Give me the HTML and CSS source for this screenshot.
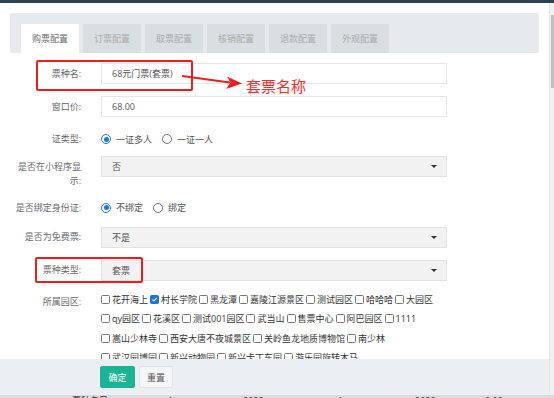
FILE: index.html
```html
<!DOCTYPE html>
<html lang="zh-CN">
<head>
<meta charset="utf-8">
<title>票种配置</title>
<link rel="stylesheet" href="styles.css">
</head>
<body>
<div class="topbar"></div>
<div class="window">
  <div class="main">
    <div class="content">
      <div class="tabs">
        <div class="tab active">购票配置</div>
        <div class="tab">订票配置</div>
        <div class="tab">取票配置</div>
        <div class="tab">核销配置</div>
        <div class="tab">退款配置</div>
        <div class="tab">外观配置</div>
      </div>
      <div class="form">
        <div class="row">
          <div class="label">票种名:</div>
          <div class="control">68元门票(套票)</div>
        </div>
        <div class="row">
          <div class="label">窗口价:</div>
          <div class="control">68.00</div>
        </div>
        <div class="row choice r-cert">
          <div class="label">证类型:</div>
          <div class="opts">
            <span class="opt"><i class="radio on"></i>一证多人</span>
            <span class="opt"><i class="radio"></i>一证一人</span>
          </div>
        </div>
        <div class="row r-mini">
          <div class="label">是否在小程序显示:</div>
          <div class="control select"><span>否</span><i class="caret"></i></div>
        </div>
        <div class="row choice r-bind">
          <div class="label">是否绑定身份证:</div>
          <div class="opts">
            <span class="opt"><i class="radio on"></i>不绑定</span>
            <span class="opt"><i class="radio"></i>绑定</span>
          </div>
        </div>
        <div class="row">
          <div class="label">是否为免费票:</div>
          <div class="control select"><span>不是</span><i class="caret"></i></div>
        </div>
        <div class="row r-type">
          <div class="label">票种类型:</div>
          <div class="control select"><span>套票</span><i class="caret"></i></div>
        </div>
        <div class="row r-park">
          <div class="label">所属园区:</div>
          <div class="checks">
            <div class="cb-line">
              <span class="cb"><i class="box"></i>花开海上</span>
              <span class="cb"><i class="box checked"><svg viewBox="0 0 9 9"><path d="M2 4.6 L3.8 6.4 L7.2 2.6" fill="none" stroke="#fff" stroke-width="1.4"/></svg></i>村长学院</span>
              <span class="cb"><i class="box"></i>黑龙潭</span>
              <span class="cb"><i class="box"></i>嘉陵江源景区</span>
              <span class="cb"><i class="box"></i>测试园区</span>
              <span class="cb"><i class="box"></i>哈哈哈</span>
              <span class="cb"><i class="box"></i>大园区</span>
            </div>
            <div class="cb-line">
              <span class="cb"><i class="box"></i>qy园区</span>
              <span class="cb"><i class="box"></i>花溪区</span>
              <span class="cb"><i class="box"></i>测试001园区</span>
              <span class="cb"><i class="box"></i>武当山</span>
              <span class="cb"><i class="box"></i>售票中心</span>
              <span class="cb"><i class="box"></i>阿巴园区</span>
              <span class="cb"><i class="box"></i>1111</span>
            </div>
            <div class="cb-line">
              <span class="cb"><i class="box"></i>嵩山少林寺</span>
              <span class="cb"><i class="box"></i>西安大唐不夜城景区</span>
              <span class="cb"><i class="box"></i>关岭鱼龙地质博物馆</span>
              <span class="cb"><i class="box"></i>南少林</span>
            </div>
            <div class="cb-line">
              <span class="cb"><i class="box"></i>武汉园博园</span>
              <span class="cb"><i class="box"></i>新兴动物园</span>
              <span class="cb"><i class="box"></i>新兴卡丁车园</span>
              <span class="cb"><i class="box"></i>游乐园旋转木马</span>
            </div>
          </div>
        </div>
      </div>
    </div>
    <div class="footer">
      <button class="btn primary">确定</button>
      <button class="btn plain">重置</button>
    </div>
  </div>
  <div class="scrollbar"><div class="thumb"></div></div>
</div>
<div class="strip">
  <span>票种名目</span><span>1</span><span>2022</span><span>1</span><span>2022</span><span>0.00</span>
</div>

<div class="mark mark-name"></div>
<div class="mark mark-type"></div>
<svg class="arrow" viewBox="0 0 66 24" width="66" height="24">
  <line x1="2" y1="6" x2="50" y2="12.5" stroke="#ee1c1c" stroke-width="2"/>
  <polygon points="62,13.5 47,6.5 50.5,12.5 46,19" fill="#ee1c1c"/>
</svg>
<div class="note">套票名称</div>
</body>
</html>
```
FILE: styles.css
```css
* { box-sizing: border-box; }

body {
  margin: 0;
  position: relative;
  width: 554px;
  height: 398px;
  overflow: hidden;
  background: #fff;
  font-family: "Open Sans", "Noto Sans CJK SC", sans-serif;
  font-size: 9px;
  color: #676a6c;
}

.topbar {
  height: 3px;
  background: #2f4050;
}

.window {
  display: flex;
  height: 392px;
}

.main {
  flex: 1;
  display: flex;
  flex-direction: column;
  min-width: 0;
}

.content {
  flex: 1;
  overflow: hidden;
  padding: 10px 10px 0;
  background: #fff;
}

.tabs {
  height: 40px;
  background: #e7eaec;
  padding: 11px 0 0 11px;
  display: flex;
  gap: 4px;
  border-radius: 2px;
}

.tab {
  width: 58px;
  height: 29px;
  display: flex;
  align-items: center;
  justify-content: center;
  background: #d9dee2;
  color: #a9abad;
}

.tab.active {
  background: #fff;
  color: #676a6c;
}

.form {
  padding-top: 10px;
}

.row {
  display: flex;
  align-items: flex-start;
  margin-bottom: 12px;
}

.label {
  width: 71px;
  margin-right: 20px;
  flex-shrink: 0;
  text-align: right;
  line-height: 14px;
  padding-top: 3.5px;
  color: #676a6c;
}

.control {
  width: 346px;
  height: 21px;
  border: 1px solid #e5e6e7;
  padding: 0 9px 0 10px;
  display: flex;
  align-items: center;
  color: #555;
  background: #fff;
}

.select {
  background: #f2f2f2;
  border-color: #e0e2e4;
  justify-content: space-between;
}

.caret {
  width: 0;
  height: 0;
  border-left: 3px solid transparent;
  border-right: 3px solid transparent;
  border-top: 3px solid #333;
}

.choice {
  height: 20px;
  align-items: center;
  margin-bottom: 7px;
}

.choice .label {
  padding-top: 0;
}

.r-mini { margin-bottom: 10px; }
.r-bind { margin-bottom: 9px; }
.r-type { margin-bottom: 9px; }
.r-park .label { padding-top: 5.5px; }

.opts {
  display: flex;
  align-items: center;
  color: #555;
}

.opt {
  display: inline-flex;
  align-items: center;
  margin-right: 10px;
}

.radio {
  width: 10px;
  height: 10px;
  border-radius: 50%;
  border: 1px solid #767676;
  margin-right: 5px;
  background: #fff;
  position: relative;
}

.radio.on {
  border-color: #1a73e8;
}

.radio.on::after {
  content: "";
  position: absolute;
  left: 1.5px;
  top: 1.5px;
  width: 5px;
  height: 5px;
  border-radius: 50%;
  background: #1a73e8;
}

.checks {
  color: #333;
}

.cb-line {
  height: 19.5px;
  display: flex;
  align-items: center;
  white-space: nowrap;
}

.cb {
  display: inline-flex;
  align-items: center;
  margin-right: 2px;
}

.box {
  width: 9px;
  height: 9px;
  border: 1px solid #767676;
  border-radius: 1.5px;
  margin-right: 2px;
  background: #fff;
  display: inline-flex;
}

.box.checked {
  background: #1a73e8;
  border-color: #1a73e8;
}

.box svg {
  width: 7px;
  height: 7px;
}

.footer {
  height: 36px;
  background: #eceff1;
  padding: 7px 0 0 100px;
  display: flex;
  align-items: flex-start;
  gap: 4px;
}

.btn {
  height: 22px;
  border-radius: 2px;
  font-family: inherit;
  font-size: 9px;
  padding: 0;
  cursor: pointer;
}

.btn.primary {
  width: 35px;
  background: #1ab394;
  border: 1px solid #1ab394;
  color: #fff;
}

.btn.plain {
  width: 34px;
  background: #f4f5f6;
  border: 1px solid #dfe2e4;
  color: #555;
}

.scrollbar {
  width: 5px;
  background: #f1f1f1;
  border-left: 1px solid #e6e6e6;
  padding-top: 12px;
}

.thumb {
  height: 73px;
  margin-left: 1px;
  background: #c1c1c1;
}

.strip {
  height: 3px;
  overflow: hidden;
  background: #d9dbdc;
  display: grid;
  grid-template-columns: 96px 75px 95px 77px 70px auto;
  padding-left: 72px;
  color: #333;
  line-height: 10px;
  padding-top: 0.5px;
}

.mark {
  position: absolute;
  border: 2px solid #ee1c1c;
  border-radius: 2px;
}

.mark-name {
  left: 36px;
  top: 60px;
  width: 157px;
  height: 31px;
}

.mark-type {
  left: 35px;
  top: 257px;
  width: 108px;
  height: 26px;
}

.arrow {
  position: absolute;
  left: 180px;
  top: 70px;
}

.note {
  position: absolute;
  left: 246px;
  top: 76px;
  font-family: "Noto Sans CJK SC", sans-serif;
  font-size: 15px;
  line-height: 20px;
  color: #ff2a2a;
}
```
